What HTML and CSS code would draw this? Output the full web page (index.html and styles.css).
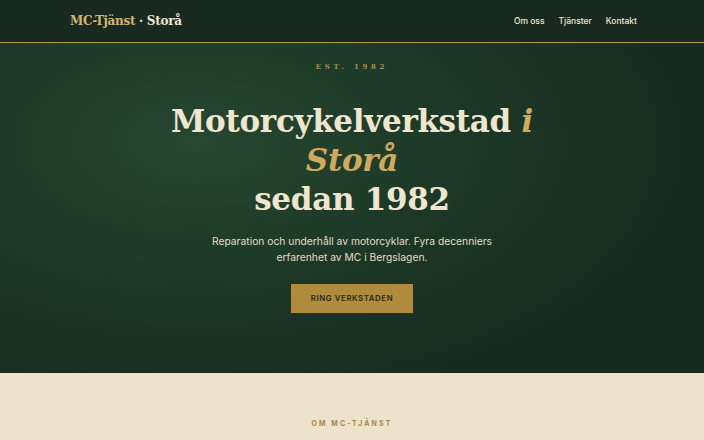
FILE: index.html
```html
<!DOCTYPE html>
<html lang="sv">
<head>
  <meta charset="utf-8">
  <title>MC-Tjänst Storå</title>
  <link rel="stylesheet" href="styles.css">
</head>
<body>
  <header class="site-header">
    <div class="header-inner">
      <a class="logo" href="#"><span class="logo-gold">MC-Tjänst</span> · Storå</a>
      <nav class="main-nav">
        <a href="#om">Om oss</a>
        <a href="#tjanster">Tjänster</a>
        <a href="#kontakt">Kontakt</a>
      </nav>
    </div>
  </header>

  <section class="hero">
    <p class="est">EST. 1982</p>
    <h1>Motorcykelverkstad <em>i<br>Storå</em><br>sedan 1982</h1>
    <p class="lead">Reparation och underhåll av motorcyklar. Fyra decenniers erfarenhet av MC i Bergslagen.</p>
    <a class="btn" href="#kontakt">RING VERKSTADEN</a>
  </section>

  <section class="about" id="om">
    <p class="eyebrow">OM MC-TJÄNST</p>
  </section>
</body>
</html>
```

FILE: styles.css
```css
/* MC-Tjänst Storå */
body {
  margin: 0;
  font-family: Inter, "Liberation Sans", sans-serif;
  background-color: #ede3cc;
  color: #efe6cf;
}

a {
  text-decoration: none;
}

.site-header {
  background-color: #182a20;
  border-bottom: 1px solid #b79844;
}

.header-inner {
  display: flex;
  justify-content: space-between;
  align-items: center;
  height: 42px;
  padding: 0 67px 0 70px;
}

.logo {
  font-family: "DejaVu Serif", serif;
  font-weight: bold;
  font-size: 12px;
  color: #efe6cf;
  letter-spacing: -0.3px;
}

.logo-gold {
  color: #d2b56f;
}

.main-nav {
  display: flex;
  gap: 14px;
}

.main-nav a {
  color: #efe6cf;
  font-size: 8.5px;
  font-weight: 500;
}

.hero {
  height: 330px;
  box-sizing: border-box;
  padding-top: 19px;
  text-align: center;
  background: radial-gradient(ellipse 70% 80% at 28% 30%, #274731 0%, #1e3a28 45%, #172c20 100%);
}

.est {
  margin: 0;
  font-family: "DejaVu Serif", serif;
  font-size: 7px;
  font-weight: bold;
  letter-spacing: 3.7px;
  color: #a88d49;
}

.hero h1 {
  margin: 31px 0 0;
  font-family: "DejaVu Serif", serif;
  font-weight: bold;
  font-size: 31px;
  line-height: 39px;
  letter-spacing: -0.3px;
  color: #efe6cf;
}

.hero h1 em {
  color: #cfa95d;
}

.lead {
  max-width: 300px;
  margin: 14px auto 0;
  font-size: 10.3px;
  line-height: 16px;
  color: #e4ddc3;
}

.btn {
  display: inline-block;
  margin-top: 19px;
  padding: 10px 20px;
  background-color: #b08b3e;
  color: #1f2a1e;
  font-size: 7.8px;
  font-weight: 600;
  letter-spacing: 0.6px;
  line-height: 9px;
}

.about {
  padding-top: 46px;
  text-align: center;
}

.eyebrow {
  margin: 0;
  font-size: 7px;
  font-weight: 700;
  letter-spacing: 2.1px;
  color: #a8894a;
}
```
